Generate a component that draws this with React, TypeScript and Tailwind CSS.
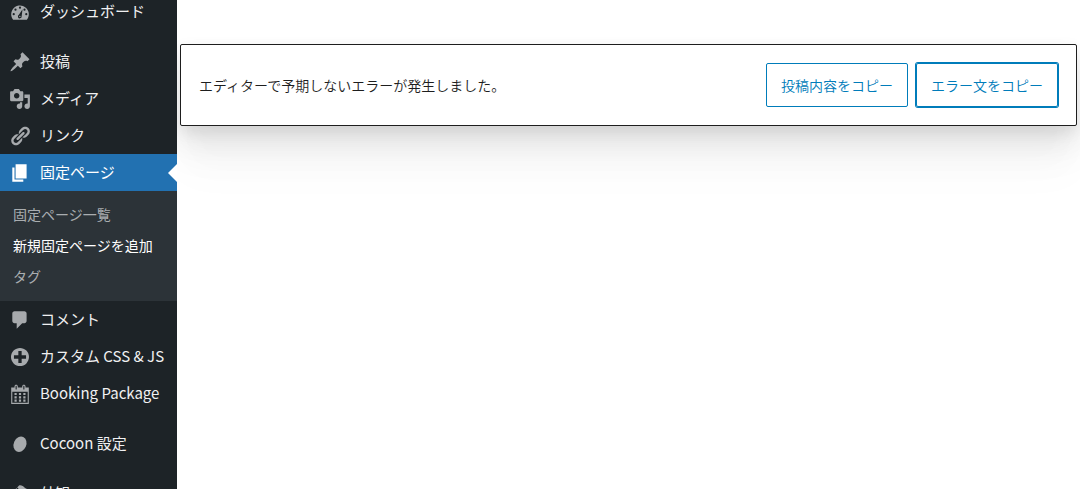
import type { ReactNode } from "react";

const icons: Record<string, ReactNode> = {
  dashboard: (
    <>
      <path d="M3.76 17h12.48A8 8 0 1 0 2 12c0 1.9.66 3.63 1.76 5z" />
      <g className="fill-[#1d2327]">
        <circle cx="10" cy="6.1" r="1" />
        <circle cx="5.9" cy="7.9" r="1" />
        <circle cx="14.1" cy="7.9" r="1" />
        <circle cx="4.3" cy="12" r="1" />
        <circle cx="15.7" cy="12" r="1" />
        <path d="M12.3 7.6 11.5 14a1.7 1.7 0 1 1-2.5-1.4z" />
      </g>
      <circle cx="9.9" cy="14" r="0.6" />
    </>
  ),
  post: (
    <path d="M10.44 3.02l1.82-1.82 6.36 6.35-1.83 1.82c-1.05-.68-2.48-.57-3.41.36l-.75.75c-.92.93-1.04 2.35-.35 3.41l-1.83 1.82-2.41-2.41-2.8 2.79c-.42.42-3.38 2.71-3.8 2.29s1.86-3.39 2.28-3.81l2.79-2.79L4.1 9.36l1.83-1.82c1.05.69 2.48.57 3.4-.36l.75-.75c.93-.92 1.05-2.35.36-3.41z" />
  ),
  media: (
    <path d="M13 11V4c0-.55-.45-1-1-1h-1.67L9 1H5L3.67 3H2c-.55 0-1 .45-1 1v7c0 .55.45 1 1 1h10c.55 0 1-.45 1-1zM7 4.5c1.38 0 2.5 1.12 2.5 2.5S8.38 9.5 7 9.5 4.5 8.38 4.5 7 5.62 4.5 7 4.5zM14 6h5v10.5c0 1.38-1.12 2.5-2.5 2.5S14 17.88 14 16.5s1.12-2.5 2.5-2.5c.17 0 .34.02.5.05V9h-3V6zm-4 8.05V13h2v3.5c0 1.38-1.12 2.5-2.5 2.5S7 17.88 7 16.5 8.12 14 9.5 14c.17 0 .34.02.5.05z" />
  ),
  link: (
    <path d="M17.74 2.76c1.68 1.69 1.68 4.41 0 6.1l-1.53 1.52c-1.12 1.12-2.7 1.47-4.14 1.09l2.62-2.61.76-.77.76-.76c.84-.84.84-2.2 0-3.04-.84-.85-2.2-.85-3.04 0l-.77.76-3.38 3.38c-.37-1.44-.02-3.02 1.1-4.14l1.52-1.53c1.69-1.68 4.42-1.68 6.1 0zM8.59 13.43l5.34-5.34c.42-.42.42-1.1 0-1.52-.44-.43-1.13-.39-1.53 0l-5.33 5.34c-.42.42-.42 1.1 0 1.52.44.43 1.13.39 1.52 0zm-.76 2.29l4.14-4.15c.38 1.44.03 3.02-1.09 4.14l-1.52 1.53c-1.69 1.68-4.41 1.68-6.1 0-1.68-1.68-1.68-4.42 0-6.1l1.53-1.52c1.12-1.12 2.7-1.47 4.14-1.1l-4.14 4.15c-.85.84-.85 2.2 0 3.05.84.84 2.2.84 3.04 0z" />
  ),
  page: <path d="M6 15V2h10v13H6zm-1 1h8v2H3V5h2v11z" />,
  comment: (
    <path d="M5 2h9c1.1 0 2 .9 2 2v7c0 1.1-.9 2-2 2h-2l-5 5v-5H5c-1.1 0-2-.9-2-2V4c0-1.1.9-2 2-2z" />
  ),
  plus: (
    <path d="M15.8 4.2c3.2 3.21 3.2 8.39 0 11.6-3.21 3.2-8.39 3.2-11.6 0C1 12.59 1 7.41 4.2 4.2 7.41 1 12.59 1 15.8 4.2zm-4.3 11.3v-4h4v-3h-4v-4h-3v4h-4v3h4v4h3z" />
  ),
  calendar: (
    <path d="M15 4h3v15H2V4h3V3c0-.41.15-.76.44-1.06.29-.29.65-.44 1.06-.44s.77.15 1.06.44c.29.3.44.65.44 1.06v1h4V3c0-.41.15-.76.44-1.06.29-.29.65-.44 1.06-.44s.77.15 1.06.44c.29.3.44.65.44 1.06v1zM6 3v2.5c0 .14.05.26.15.36.09.09.21.14.35.14s.26-.05.35-.14c.1-.1.15-.22.15-.36V3c0-.14-.05-.26-.15-.35-.09-.1-.21-.15-.35-.15s-.26.05-.35.15c-.1.09-.15.21-.15.35zm7 0v2.5c0 .14.05.26.14.36.1.09.22.14.36.14s.26-.05.36-.14c.09-.1.14-.22.14-.36V3c0-.14-.05-.26-.14-.35-.1-.1-.22-.15-.36-.15s-.26.05-.36.15c-.09.09-.14.21-.14.35zm4 15V8H3v10h14zM7 9v2H5V9h2zm2 0h2v2H9V9zm4 2V9h2v2h-2zm-6 1v2H5v-2h2zm2 0h2v2H9v-2zm4 2v-2h2v2h-2zm-6 1v2H5v-2h2zm4 2H9v-2h2v2zm4 0h-2v-2h2v2z" />
  ),
  cocoon: <ellipse cx="10" cy="10.2" rx="5.7" ry="7.2" transform="rotate(24 10 10.2)" />,
  appearance: (
    <path d="M14.48 11.06L7.41 3.99l1.5-1.5c.5-.56 2.3-.47 3.51.32 1.21.8 1.43 1.28 2.91 2.1 1.18.64 2.45 1.26 4.45.85zm-.71.71L6.7 4.7 4.93 6.47c-.39.39-.39 1.02 0 1.41l1.06 1.06c.39.39.39 1.03 0 1.42-.6.6-1.43 1.11-2.21 1.69-.35.26-.7.53-1.01.84C1.43 14.23.4 16.08 1.4 17.07c.99 1 2.84-.03 4.18-1.36.31-.31.58-.66.85-1.02.57-.78 1.08-1.61 1.69-2.21.39-.39 1.02-.39 1.41 0l1.06 1.06c.39.39 1.02.39 1.41 0z" />
  ),
};

const menuGroups = [
  [{ label: "ダッシュボード", icon: "dashboard" }],
  [
    { label: "投稿", icon: "post" },
    { label: "メディア", icon: "media" },
    { label: "リンク", icon: "link" },
    {
      label: "固定ページ",
      icon: "page",
      children: ["固定ページ一覧", "新規固定ページを追加", "タグ"],
    },
    { label: "コメント", icon: "comment" },
    { label: "カスタム CSS & JS", icon: "plus" },
    { label: "Booking Package", icon: "calendar" },
  ],
  [{ label: "Cocoon 設定", icon: "cocoon" }],
  [{ label: "外観", icon: "appearance" }],
] as { label: string; icon: string; children?: string[] }[][];

const currentPage = "新規固定ページを追加";

function Sidebar() {
  return (
    <nav className="w-[177px] shrink-0 overflow-hidden bg-[#1d2327] text-[#f0f0f1]">
      {/* the menu is scrolled down a little */}
      <div className="-mt-[7px] flex flex-col gap-[13px]">
        {menuGroups.map((group) => (
          <ul key={group[0].label}>
            {group.map((item) => (
              <li key={item.label}>
                <a
                  href="#"
                  className={`relative flex h-[37px] items-center gap-[9px] pl-[9px] text-[15px] whitespace-nowrap ${
                    item.children ? "bg-[#2271b1] text-white" : ""
                  }`}
                >
                  <svg
                    viewBox="0 0 20 20"
                    className={`size-[22px] shrink-0 ${
                      item.children ? "fill-white" : "fill-[#a7aaad]"
                    }`}
                  >
                    {icons[item.icon]}
                  </svg>
                  {item.label}
                  {item.children && (
                    <svg
                      viewBox="0 0 9 18"
                      className="absolute top-1/2 right-0 h-[18px] w-[9px] -translate-y-1/2 fill-white"
                    >
                      <path d="M9 0v18L0 9z" />
                    </svg>
                  )}
                </a>
                {item.children && (
                  <ul className="bg-[#2c3338] pt-[7px] pb-2.5">
                    {item.children.map((child) => (
                      <li key={child}>
                        <a
                          href="#"
                          className={`flex h-[31px] items-center pl-[13px] text-sm whitespace-nowrap ${
                            child === currentPage ? "text-white" : "text-[#a9adb0]"
                          }`}
                        >
                          {child}
                        </a>
                      </li>
                    ))}
                  </ul>
                )}
              </li>
            ))}
          </ul>
        ))}
      </div>
    </nav>
  );
}

export default function App() {
  const button =
    "h-11 rounded-xs border border-[#007cba] px-3.5 text-sm font-[350] whitespace-nowrap text-[#007cba]";

  return (
    <div className="flex h-screen overflow-hidden bg-white font-['Noto_Sans_CJK_JP',sans-serif]">
      <Sidebar />
      <main className="min-w-0 flex-1 overflow-hidden px-[3px] pt-11">
        <div
          role="alert"
          className="flex items-center gap-2 rounded-xs border border-[#1e1e1e] bg-white p-[18px] text-[#1e1e1e] shadow-[0_5px_15px_rgba(0,0,0,0.08),0_15px_27px_rgba(0,0,0,0.07),0_30px_36px_rgba(0,0,0,0.04),0_50px_43px_rgba(0,0,0,0.02)]"
        >
          <p className="flex-1 text-sm font-[350]">
            エディターで予期しないエラーが発生しました。
          </p>
          <button type="button" className={button}>
            投稿内容をコピー
          </button>
          <button type="button" className={`${button} ring-1 ring-[#007cba]`}>
            エラー文をコピー
          </button>
        </div>
      </main>
    </div>
  );
}
